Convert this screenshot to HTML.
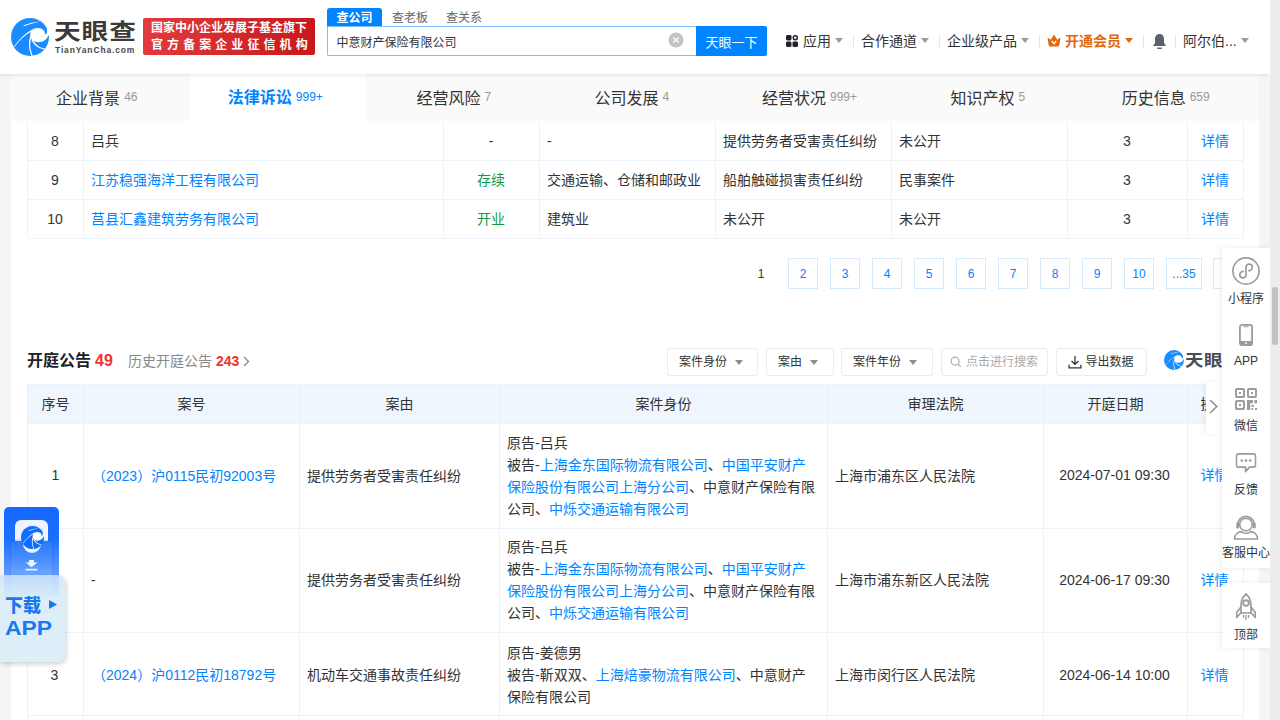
<!DOCTYPE html>
<html lang="zh-CN">
<head>
<meta charset="utf-8">
<title>中意财产保险有限公司 - 天眼查</title>
<style>
*{box-sizing:border-box;margin:0;padding:0}
html,body{width:1280px;height:720px;overflow:hidden}
body{position:relative;background:#f5f5f5;font-family:"Liberation Sans","Noto Sans CJK SC",sans-serif;font-size:14px;color:#333;line-height:1}
a{color:#0084ff;text-decoration:none}
.abs{position:absolute}
/* scrollbar */
#sbar{position:absolute;left:1270px;top:0;width:10px;height:720px;background:#ececec;z-index:50}
#sbar i{position:absolute;left:2px;top:287px;width:6px;height:58px;border-radius:3px;background:#c1c1c1}
/* header */
#hd{position:absolute;left:0;top:0;width:1270px;height:74px;background:#fff;box-shadow:0 1px 4px rgba(0,0,0,.10);z-index:20}
#badge{position:absolute;left:143px;top:18px;width:172px;height:37px;border-radius:2px;background:linear-gradient(90deg,#e23b3d,#c8181b);color:#fff;font-size:12px;line-height:16px;padding:2px 0 0 8px;white-space:nowrap;overflow:hidden}
#badge b{display:block;font-weight:500}
#badge .l1{letter-spacing:0;font-weight:bold}
#badge .l2{letter-spacing:4.070px;margin-top:1px;font-weight:bold}
.stab{position:absolute;top:10px;font-size:12px;color:#666;height:16px;line-height:16px}
#stab1{left:327px;width:55px;top:8px;height:19px;line-height:20px;background:#0084ff;color:#fff;text-align:center;font-weight:bold;border-radius:3px 3px 0 0}
#sinput{position:absolute;left:327px;top:26px;width:369px;height:30px;border:1px solid #7fc0ff;border-right:none;border-radius:2px 0 0 2px;background:#fff;font-size:12px;line-height:32px;padding-left:8.500px;color:#333;overflow:hidden}
#sbtn{position:absolute;left:696px;top:26px;width:71px;height:30px;background:#0084ff;color:#fff;font-size:13px;line-height:33px;text-align:center;border-radius:0 2px 2px 0;overflow:hidden}
#sclear{position:absolute;left:668px;top:32px;width:15px;height:15px;border-radius:50%;background:#c8c8c8}
.nv{position:absolute;top:33px;font-size:14px;color:#333;height:16px;line-height:16px;white-space:nowrap}
.caret{display:inline-block;width:0;height:0;border-left:4px solid transparent;border-right:4px solid transparent;border-top:5px solid #9b9b9b;vertical-align:middle;margin-left:4px;position:relative;top:-2px}
.sep{position:absolute;top:35px;width:1px;height:12px;background:#e6e6e6}
/* tabs */
#wrap{position:absolute;left:11px;top:74px;width:1248px;height:646px;background:#fff}
#tabs{position:absolute;left:0;top:0;width:1248px;height:47px;background:#fafafa;z-index:5}
.tab{position:absolute;top:0;height:47px;line-height:49px;text-align:center;font-size:16px;color:#333;white-space:nowrap}
.tab span{font-size:12px;color:#999;margin-left:4px;position:relative;top:-3px}
.tab.on{background:#fff;color:#0084ff;font-weight:bold;line-height:47px}
.tab.on span{color:#0084ff;font-weight:normal;top:-2px}

/* table 1 */
.t1{position:absolute;left:16px;top:46px;width:1216px;border-collapse:collapse;table-layout:fixed;font-size:14px}
.t1 td{height:39px;border:1px solid #ecf3fb;padding:0 8px 0 7px;vertical-align:middle;white-space:nowrap;overflow:hidden}
.t1 tr:first-child td{height:40px;padding-top:1px}
.c{text-align:center}
.g{color:#0f9b46}
/* pager */
.pg{position:absolute;top:184px;width:30px;height:31px;line-height:31px;border:1px solid #d8ebfd;border-radius:0;text-align:center;font-size:12px;color:#0084ff;background:#fff}
.pg.cur{border-color:transparent;color:#333}
/* section head */
#sh{position:absolute;left:16px;top:277px;font-size:16px;line-height:20px;font-weight:bold;color:#222;white-space:nowrap}
#sh em{font-style:normal;color:#f2322d;margin-left:4px}
#sh2{position:absolute;left:117px;top:279px;font-size:14px;line-height:16px;color:#888;white-space:nowrap}
#sh2 em{font-style:normal;color:#f2322d;font-weight:bold;margin-left:4px}
.fb{position:absolute;top:274px;height:28px;line-height:27px;border:1px solid #ebebeb;border-radius:3px;font-size:12px;color:#333;background:#fff;padding-left:11px;white-space:nowrap}
.fb .caret{top:-.500px;margin-left:8px;border-top-color:#8c8c8c;border-left-width:4.500px;border-right-width:4.500px}
/* table 2 */
.t2{position:absolute;left:16px;top:310px;width:1216px;border-collapse:collapse;table-layout:fixed;font-size:14px}
.t2 th{height:39px;background:#eff6fd;border:1px solid #e9f1fa;font-weight:normal;color:#333;text-align:center;white-space:nowrap;overflow:hidden;padding-bottom:1px}
.t2 td{border:1px solid #ecf3fb;padding:7px 8px 8px 7px;vertical-align:middle;line-height:22px;overflow:hidden}
.t2 tr:nth-child(2) td{padding-top:8px}
.t2 tr:nth-child(2) td:first-child{padding-right:4px}
.t2 tr:nth-child(4) td{padding-top:9px;padding-bottom:7px}
.t2 tr:nth-child(2) td.c{padding-top:6px}
.t2 td.l{white-space:nowrap;padding-left:8px}
.t2 td.c{padding-left:4px;padding-right:6px;white-space:nowrap}

/* floats */
#rs{position:absolute;left:1222px;top:248px;width:48px;height:320px;background:#fff;border-radius:4px 0 0 4px;box-shadow:-1px 0 6px rgba(0,0,0,.08);z-index:30}
#rs2{position:absolute;left:1222px;top:583px;width:48px;height:65px;background:#fff;border-radius:4px 0 0 4px;box-shadow:-1px 0 6px rgba(0,0,0,.08);z-index:30}
.ri{position:absolute;left:0;width:48px;text-align:center;font-size:12px;line-height:14px;color:#333;white-space:nowrap}
.ri svg{position:absolute;left:50%;transform:translateX(-50%)}
#chev{position:absolute;left:1206px;top:382px;width:17px;height:52px;background:#fff;border-radius:3px 0 0 3px;box-shadow:-2px 0 4px rgba(0,0,0,.06);z-index:29}
#dl{position:absolute;left:0;top:500px;width:70px;height:170px;z-index:40}
</style>
</head>
<body>
<div id="sbar"><i></i></div>

<div id="hd">
  <!-- logo -->
  <svg class="abs" style="left:11px;top:18px" width="38" height="38" viewBox="0 0 38 38">
    <circle cx="19" cy="19" r="19" fill="#1a8cff"/>
    <path d="M19.300 16.800 C19.300 12.800 22.300 10 26.500 10 C29.800 10 32.300 11.200 33.600 13.400 C34 14.200 33.800 15.200 33.400 15.800 L35.400 16 C36.200 14.200 36.300 12.300 35.800 10.400 L40 10.400 L40 17.400 L37.500 17.400 C36.500 19.500 35.300 21.200 33.400 22.500 C31.500 23.800 29.500 24.300 27.200 24.200 C23.800 24.200 19.300 21.500 19.300 16.800 Z" fill="#fff"/>
    <path d="M21.500 11.300 Q10.500 17.500 3 28.600 L3.600 29 Q11 18.200 21.500 13 Z" fill="#fff"/>
    <path d="M19.600 17 Q15.800 28 20.600 38.200 L21.700 37.800 Q17.400 28 20.400 20 Z" fill="#fff"/>
    <path d="M20.200 21.500 Q23.500 30 33.400 31.600 L33.800 30.500 Q25.500 29 22 22 Z" fill="#fff"/>
    <path d="M12.200 7.500 Q20 4 29.800 3.200 Q20 5.600 13 8.300 Z" fill="#fff"/>
  </svg>
  <div class="abs" id="lgt" style="left:53.500px;top:16px;font-size:22px;line-height:32px;font-weight:700;color:#3e3a39;letter-spacing:.700px;white-space:nowrap;transform:scaleX(1.215);transform-origin:left center">天眼查</div>
  <div class="abs" id="lgs" style="left:55px;top:44.500px;font-size:8.500px;line-height:10px;font-weight:bold;color:#4a4645;letter-spacing:.850px;white-space:nowrap">TianYanCha.com</div>
  <div id="badge"><b class="l1">国家中小企业发展子基金旗下</b><b class="l2">官方备案企业征信机构</b></div>

  <div class="stab" id="stab1">查公司</div>
  <div class="stab" style="left:392px">查老板</div>
  <div class="stab" style="left:446px">查关系</div>
  <div id="sinput">中意财产保险有限公司</div>
  <svg class="abs" style="left:668px;top:32px" width="16" height="16" viewBox="0 0 16 16"><circle cx="8" cy="8" r="7.5" fill="#c4c4c4"/><path d="M5.2 5.2 L10.8 10.8 M10.8 5.2 L5.2 10.8" stroke="#fff" stroke-width="1.3"/></svg>
  <div id="sbtn">天眼一下</div>

  <svg class="abs" style="left:786px;top:35px" width="12" height="12" viewBox="0 0 12 12"><rect x="0" y="0" width="5.500" height="5.500" rx="1.400" fill="#1e2128"/><rect x="0" y="6.500" width="5.500" height="5.500" rx="1.400" fill="#1e2128"/><rect x="6.500" y="6.500" width="5.500" height="5.500" rx="1.400" fill="#1e2128"/><circle cx="9.250" cy="2.750" r="2" fill="none" stroke="#1e2128" stroke-width="1.500"/></svg>
  <div class="nv" style="left:803px">应用<i class="caret"></i></div>
  <div class="sep" style="left:853px"></div>
  <div class="nv" style="left:861px">合作通道<i class="caret"></i></div>
  <div class="sep" style="left:939px"></div>
  <div class="nv" style="left:947px">企业级产品<i class="caret"></i></div>
  <div class="sep" style="left:1039px"></div>
  <svg class="abs" style="left:1047px;top:34px" width="14" height="13" viewBox="0 0 14 13"><path d="M.500 3.500 L3.800 5.800 L7 .500 L10.200 5.800 L13.500 3.500 L12.300 11 Q12.200 12.500 10.800 12.500 L3.200 12.500 Q1.800 12.500 1.700 11 Z" fill="#e2670b"/><path d="M4.700 7 L7 9.700 L9.300 7" stroke="#fff" stroke-width="1.400" fill="none"/></svg>
  <div class="nv" style="left:1065px;color:#e2670b;font-weight:bold">开通会员<i class="caret" style="border-top-color:#e2670b"></i></div>
  <div class="sep" style="left:1143px"></div>
  <svg class="abs" style="left:1152px;top:33px" width="15" height="17" viewBox="0 0 15 17"><path d="M7.5 1 C4.5 1 3 3.5 3 6 L3 10 L1 13 L14 13 L12 10 L12 6 C12 3.500 10.500 1 7.500 1 Z" fill="#5b626c"/><rect x="5" y="14.500" width="5" height="1.600" rx=".8" fill="#5b626c"/></svg>
  <div class="sep" style="left:1175px"></div>
  <div class="nv" style="left:1183px">阿尔伯...<i class="caret"></i></div>
</div>

<div id="wrap">
  <div id="tabs">
    <div class="tab" style="left:0;width:179px;padding-right:7.400px">企业背景<span>46</span></div>
    <div class="tab on" style="left:179px;width:176px;padding-right:5.400px">法律诉讼<span>999+</span></div>
    <div class="tab" style="left:355px;width:178px;padding-right:2.500px">经营风险<span>7</span></div>
    <div class="tab" style="left:533px;width:178px;padding-right:2.500px">公司发展<span>4</span></div>
    <div class="tab" style="left:711px;width:178px;padding-right:3.000px">经营状况<span>999+</span></div>
    <div class="tab" style="left:889px;width:178px;padding-right:2.500px">知识产权<span>5</span></div>
    <div class="tab" style="left:1067px;width:181px;padding-right:5.600px">历史信息<span>659</span></div>
  </div>
  
  <table class="t1">
    <colgroup><col style="width:56px"><col style="width:360px"><col style="width:96px"><col style="width:176px"><col style="width:176px"><col style="width:176px"><col style="width:120px"><col style="width:56px"></colgroup>
    <tr><td class="c">8</td><td>吕兵</td><td class="c">-</td><td>-</td><td>提供劳务者受害责任纠纷</td><td>未公开</td><td class="c">3</td><td class="c"><a>详情</a></td></tr>
    <tr><td class="c">9</td><td><a>江苏稳强海洋工程有限公司</a></td><td class="c g">存续</td><td>交通运输、仓储和邮政业</td><td>船舶触碰损害责任纠纷</td><td>民事案件</td><td class="c">3</td><td class="c"><a>详情</a></td></tr>
    <tr><td class="c">10</td><td><a>莒县汇鑫建筑劳务有限公司</a></td><td class="c g">开业</td><td>建筑业</td><td>未公开</td><td>未公开</td><td class="c">3</td><td class="c"><a>详情</a></td></tr>
  </table>

  <div class="pg cur" style="left:735px">1</div>
  <div class="pg" style="left:777px">2</div>
  <div class="pg" style="left:819px">3</div>
  <div class="pg" style="left:861px">4</div>
  <div class="pg" style="left:903px">5</div>
  <div class="pg" style="left:945px">6</div>
  <div class="pg" style="left:987px">7</div>
  <div class="pg" style="left:1029px">8</div>
  <div class="pg" style="left:1071px">9</div>
  <div class="pg" style="left:1113px">10</div>
  <div class="pg" style="left:1155px;width:36px">...35</div>
  <div class="pg" style="left:1202px">&gt;</div>

  <div id="sh">开庭公告<em>49</em></div>
  <div id="sh2">历史开庭公告<em>243</em><svg width="7" height="11" viewBox="0 0 7 11" style="margin-left:4px;vertical-align:-1px"><path d="M1 1 L5.500 5.500 L1 10" fill="none" stroke="#888" stroke-width="1.300"/></svg></div>

  <div class="fb" style="left:656px;width:91px">案件身份<i class="caret"></i></div>
  <div class="fb" style="left:755px;width:68px">案由<i class="caret"></i></div>
  <div class="fb" style="left:830px;width:92px">案件年份<i class="caret"></i></div>
  <div class="fb" style="left:930px;width:107px;color:#aaa;padding-left:8px"><svg width="12" height="12" viewBox="0 0 11 11" style="vertical-align:-2px;margin-right:4px"><circle cx="4.700" cy="4.700" r="3.600" fill="none" stroke="#aaa" stroke-width="1.100"/><path d="M7.400 7.400 L10 10" stroke="#aaa" stroke-width="1.100"/></svg>点击进行搜索</div>
  <div class="fb" style="left:1045px;width:91px"><svg width="14" height="14" viewBox="0 0 13 13" style="vertical-align:-2.500px;margin-right:3.500px"><path d="M6.500 1 L6.500 8.500 M3.300 5.500 L6.500 8.700 L9.700 5.500 M1 9 L1 12 L12 12 L12 9" fill="none" stroke="#333" stroke-width="1.200"/></svg>导出数据</div>
  <!-- watermark logo -->
  <svg class="abs" style="left:1152.500px;top:275.500px" width="20" height="20" viewBox="0 0 38 38">
    <circle cx="19" cy="19" r="19" fill="#1a8cff"/>
    <path d="M19.300 16.800 C19.300 12.800 22.300 10 26.500 10 C29.800 10 32.300 11.200 33.600 13.400 C34 14.200 33.800 15.200 33.400 15.800 L35.400 16 C36.200 14.200 36.300 12.300 35.800 10.400 L40 10.400 L40 17.400 L37.500 17.400 C36.500 19.500 35.300 21.200 33.400 22.500 C31.500 23.800 29.500 24.300 27.200 24.200 C23.800 24.200 19.300 21.500 19.300 16.800 Z" fill="#fff"/>
    <path d="M21.500 11.300 Q10.500 17.500 3 28.600 L3.600 29 Q11 18.200 21.500 13 Z" fill="#fff"/>
    <path d="M19.600 17 Q15.800 28 20.600 38.200 L21.700 37.800 Q17.400 28 20.400 20 Z" fill="#fff"/>
    <path d="M20.200 21.500 Q23.500 30 33.400 31.600 L33.800 30.500 Q25.500 29 22 22 Z" fill="#fff"/>
    <path d="M12.200 7.500 Q20 4 29.800 3.200 Q20 5.600 13 8.300 Z" fill="#fff"/>
  </svg>
  <div class="abs" style="left:1173.500px;top:272px;width:38px;height:30px;overflow:hidden"><div style="font-size:16px;line-height:29px;font-weight:700;color:#4a4d53;letter-spacing:.500px;white-space:nowrap;transform:scaleX(1.150);transform-origin:left center">天眼查</div></div>

  <table class="t2">
    <colgroup><col style="width:56px"><col style="width:216px"><col style="width:200px"><col style="width:328px"><col style="width:216px"><col style="width:144px"><col style="width:56px"></colgroup>
    <tr><th>序号</th><th>案号</th><th>案由</th><th>案件身份</th><th>审理法院</th><th>开庭日期</th><th style="text-align:left;padding-left:12.500px">操作</th></tr>
    <tr><td class="c">1</td><td class="l"><a>（2023）沪0115民初92003号</a></td><td>提供劳务者受害责任纠纷</td><td>原告-吕兵<br>被告-<a>上海金东国际物流有限公司</a>、<a>中国平安财产保险股份有限公司上海分公司</a>、中意财产保险有限公司、<a>中烁交通运输有限公司</a></td><td>上海市浦东区人民法院</td><td class="c">2024-07-01 09:30</td><td class="c"><a>详情</a></td></tr>
    <tr><td class="c">2</td><td>-</td><td>提供劳务者受害责任纠纷</td><td>原告-吕兵<br>被告-<a>上海金东国际物流有限公司</a>、<a>中国平安财产保险股份有限公司上海分公司</a>、中意财产保险有限公司、<a>中烁交通运输有限公司</a></td><td>上海市浦东新区人民法院</td><td class="c">2024-06-17 09:30</td><td class="c"><a>详情</a></td></tr>
    <tr><td class="c">3</td><td class="l"><a>（2024）沪0112民初18792号</a></td><td>机动车交通事故责任纠纷</td><td>原告-姜德男<br>被告-靳双双、<a>上海焙豪物流有限公司</a>、中意财产保险有限公司</td><td>上海市闵行区人民法院</td><td class="c">2024-06-14 10:00</td><td class="c"><a>详情</a></td></tr>
    <tr><td class="c">4</td><td class="l"><a>（2024）沪0115民初44419号</a></td><td>机动车交通事故责任纠纷</td><td>原告-李兰<br>被告-中意财产保险有限公司</td><td>上海市浦东新区人民法院</td><td class="c">2024-06-12 14:00</td><td class="c"><a>详情</a></td></tr>
  </table>

</div>

<div id="chev"><svg style="position:absolute;left:3.300px;top:17.400px" width="9" height="15" viewBox="0 0 9 15"><path d="M1 1 L7.800 7.500 L1 14" fill="none" stroke="#8a8a8a" stroke-width="1.500"/></svg></div>

<div id="rs">
  <div class="ri" style="top:0;height:60px">
    <svg style="top:9px" width="28" height="28" viewBox="0 0 28 28"><circle cx="14" cy="14" r="13.100" fill="none" stroke="#9b9b9b" stroke-width="1.600"/><path d="M14 17.800 L14 10 C14 6.200 20.200 6.200 20.200 10.300 C20.200 12.800 18 13.700 16.800 13.700 M14 10.200 L14 18 C14 21.800 7.800 21.800 7.800 17.700 C7.800 15.200 10 14.300 11.200 14.300" fill="none" stroke="#9b9b9b" stroke-width="1.700" stroke-linecap="round"/></svg>
    <div style="position:absolute;top:44px;left:0;width:48px">小程序</div>
  </div>
  <div class="ri" style="top:62px;height:60px">
    <svg style="top:14px" width="14" height="22" viewBox="0 0 14 22"><rect x=".9" y=".9" width="12.200" height="20.200" rx="2.200" fill="none" stroke="#9b9b9b" stroke-width="1.800"/><rect x="1" y="17" width="12" height="4.500" fill="#9b9b9b"/><rect x="4.500" y="2.200" width="5" height="1" fill="#9b9b9b"/><circle cx="7" cy="19" r=".9" fill="#fff"/></svg>
    <div style="position:absolute;top:44px;left:0;width:48px">APP</div>
  </div>
  <div class="ri" style="top:126px;height:60px">
    <svg style="top:14px" width="22" height="22" viewBox="0 0 22 22" fill="none" stroke="#9b9b9b" stroke-width="1.900"><rect x="1" y="1" width="8" height="8" rx=".8"/><rect x="13" y="1" width="8" height="8" rx=".8"/><rect x="1" y="13" width="8" height="8" rx=".8"/><g fill="#9b9b9b" stroke="none"><rect x="4" y="4" width="2" height="2"/><rect x="16" y="4" width="2" height="2"/><rect x="4" y="16" width="2" height="2"/><rect x="12" y="12" width="6" height="3.200"/><rect x="12" y="12" width="3.200" height="10"/><rect x="19.300" y="12" width="2.700" height="3.200"/><rect x="16.500" y="16.800" width="2.200" height="2.200"/><rect x="16.500" y="20" width="1.600" height="2"/><rect x="20" y="20" width="2" height="2"/></g></svg>
    <div style="position:absolute;top:45px;left:0;width:48px">微信</div>
  </div>
  <div class="ri" style="top:190px;height:60px">
    <svg style="top:15px" width="21" height="20" viewBox="0 0 21 20"><path d="M3 .9 L18 .9 Q20.100 .9 20.100 3 L20.100 12 Q20.100 14.100 18 14.100 L14 14.100 L10 18.600 L10 14.100 L3 14.100 Q.9 14.100 .9 12 L.9 3 Q.9 .9 3 .9 Z" fill="none" stroke="#9b9b9b" stroke-width="1.700" stroke-linejoin="round"/><circle cx="6.300" cy="7.500" r="1.300" fill="#9b9b9b"/><circle cx="10.500" cy="7.500" r="1.300" fill="#9b9b9b"/><circle cx="14.700" cy="7.500" r="1.300" fill="#9b9b9b"/></svg>
    <div style="position:absolute;top:45px;left:0;width:48px">反馈</div>
  </div>
  <div class="ri" style="top:254px;height:60px">
    <svg style="top:11.500px" width="26" height="26" viewBox="0 0 26 26" fill="none" stroke="#9b9b9b" stroke-width="1.600"><circle cx="13" cy="10.500" r="6.300"/><path d="M4.600 11 A8.400 8.600 0 0 1 21.400 11"/><rect x="3.300" y="8.500" width="2.800" height="6" rx="1.200" fill="#9b9b9b" stroke="none"/><rect x="19.900" y="8.500" width="2.800" height="6" rx="1.200" fill="#9b9b9b" stroke="none"/><path d="M1.500 25 C1.500 20 5.500 18 8.300 17.600 C11 19.600 15 19.600 17.700 17.600 C20.500 18 24.500 20 24.500 25 Z" stroke-linejoin="round"/></svg>
    <div style="position:absolute;top:44px;left:0;width:48px">客服中心</div>
  </div>
</div>
<div id="rs2">
  <div class="ri" style="top:0;height:65px">
    <svg style="top:10px" width="21" height="28" viewBox="0 0 21 28" fill="none" stroke="#9b9b9b" stroke-width="1.700" stroke-linejoin="round"><path d="M10.500 1 C5.500 5 5 11 5.600 20 L15.400 20 C16 11 15.500 5 10.500 1 Z"/><circle cx="10.500" cy="10" r="2.800" stroke-width="1.900"/><path d="M5.500 14 L1.200 19.500 L1.200 24.500 L5.600 19.500 M15.500 14 L19.800 19.500 L19.800 24.500 L15.400 19.500"/><path d="M8 22 L8 25 M10.500 22 L10.500 27 M13 22 L13 25" stroke-width="1.300"/></svg>
    <div style="position:absolute;top:45px;left:0;width:48px">顶部</div>
  </div>
</div>

<div id="dl">
  <div style="position:absolute;left:4px;top:7px;width:55px;height:90px;border-radius:5px 5px 0 0;background:linear-gradient(180deg,#1468ff 0%,#1c6fff 35%,#5f9bff 75%,#8db8ff 100%)"></div>
  <div style="position:absolute;left:15px;top:20px;width:33px;height:40px;border-radius:6px;background:#eef4ff"></div>
  
  <div style="position:absolute;left:11px;top:41px;width:41px;height:50px;border-radius:3px 3px 0 0;background:linear-gradient(180deg,#2a78ff 0%,#4a8fff 40%,#9cc3ff 100%);box-shadow:0 -1px 2px rgba(0,40,160,.22)"></div>
  <div style="position:absolute;left:23px;top:32px;width:18px;height:21px;border-radius:0 0 9px 9px;background:#f1f6ff;clip-path:inset(9px 0 0 0)"></div>
  <svg style="position:absolute;left:20.700px;top:26.400px" width="23" height="23" viewBox="0 0 38 38">
    <circle cx="19" cy="19" r="19" fill="#0f6dff"/>
    <path d="M19.300 16.800 C19.300 12.800 22.300 10 26.500 10 C29.800 10 32.300 11.200 33.600 13.400 C34 14.200 33.800 15.200 33.400 15.800 L35.400 16 C36.200 14.200 36.300 12.300 35.800 10.400 L40 10.400 L40 17.400 L37.500 17.400 C36.500 19.500 35.300 21.200 33.400 22.500 C31.500 23.800 29.500 24.300 27.200 24.200 C23.800 24.200 19.300 21.500 19.300 16.800 Z" fill="#fff"/>
    <path d="M21.500 11.300 Q10.500 17.500 3 28.600 L3.600 29 Q11 18.200 21.500 13 Z" fill="#fff"/>
    <path d="M19.600 17 Q15.800 28 20.600 38.200 L21.700 37.800 Q17.400 28 20.400 20 Z" fill="#fff"/>
    <path d="M20.200 21.500 Q23.500 30 33.400 31.600 L33.800 30.500 Q25.500 29 22 22 Z" fill="#fff"/>
    <path d="M12.200 7.500 Q20 4 29.800 3.200 Q20 5.600 13 8.300 Z" fill="#fff"/>
  </svg>
  <svg style="position:absolute;left:25px;top:59.500px" width="13" height="11" viewBox="0 0 13 11"><path d="M4 0 L9 0 L9 2.500 L12.500 2.500 L6.500 7.300 L.500 2.500 L4 2.500 Z" fill="#eaf2ff"/><rect x=".5" y="8.800" width="12" height="1.700" fill="#eaf2ff"/></svg>
  <div style="position:absolute;left:0;top:75px;width:65px;height:87px;border-radius:0 8px 8px 0;background:linear-gradient(180deg,rgba(208,228,248,.80) 0%,rgba(219,237,248,.95) 26%,rgba(221,238,248,.97) 100%);box-shadow:1px 2px 5px rgba(0,0,0,.20)"></div>
  <div style="position:absolute;left:5px;top:95.500px;width:60px;font-size:18px;line-height:20px;font-weight:900;color:#1b78ef;letter-spacing:0;white-space:nowrap">下载<svg width="8" height="9" viewBox="0 0 8 9" style="margin-left:7.500px;vertical-align:3px"><path d="M0 0 L8 4.500 L0 9 Z" fill="#1b78ef"/></svg></div>
  <div style="position:absolute;left:4.500px;top:116px;width:60px;font-size:21px;line-height:24px;font-weight:bold;color:#1b78ef;letter-spacing:0;transform:scaleX(1.090);transform-origin:left center">APP</div>
</div>
</body>
</html>
